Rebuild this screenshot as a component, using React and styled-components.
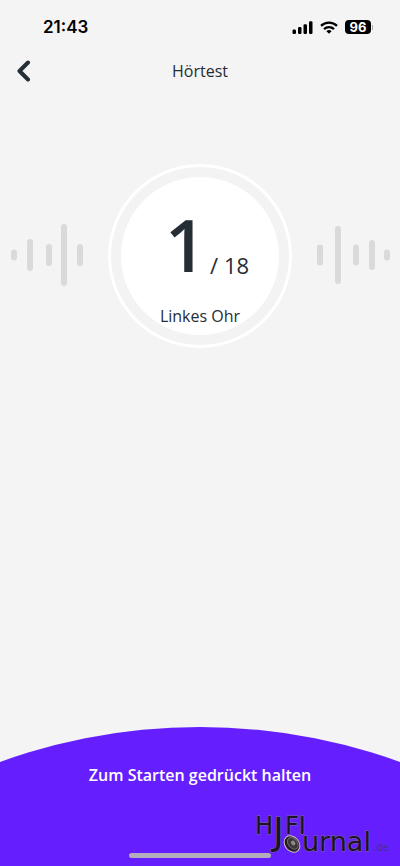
import React from 'react'
import styled, { createGlobalStyle } from 'styled-components'

const GlobalStyle = createGlobalStyle`
  * {
    box-sizing: border-box;
  }

  body {
    margin: 0;
    background: #f4f4f4;
    color: #252d35;
    font-family: "Open Sans", sans-serif;
  }
`

// **** Styled Components : Start
const Screen = styled.div`
  position: relative;
  display: flex;
  flex-direction: column;
  min-height: 100vh;
  overflow: hidden;
`

const StatusBar = styled.div`
  display: flex;
  align-items: center;
  justify-content: space-between;
  height: 54px;
  padding: 0 27px 0 43px;
  color: #000;
  font-family: Inter, sans-serif;
`

const Time = styled.span`
  font-size: 17px;
  font-weight: 600;
`

const StatusIcons = styled.div`
  display: flex;
  align-items: center;
  gap: 7px;
`

const Battery = styled.span`
  display: flex;
  align-items: center;
  gap: 1px;

  &::after {
    content: "";
    width: 1px;
    height: 5px;
    background: #aaa;
  }
`

const BatteryLevel = styled.span`
  width: 26px;
  border-radius: 4px;
  background: #000;
  color: #fff;
  font-size: 13px;
  font-weight: 700;
  line-height: 14px;
  text-align: center;
`

const Header = styled.header`
  display: grid;
  grid-template-columns: 48px 1fr 48px;
  align-items: center;
  height: 34px;
`

const BackButton = styled.button`
  display: flex;
  padding: 0 0 0 16px;
  border: 0;
  background: none;
  color: inherit;
  cursor: pointer;
`

const Title = styled.h1`
  margin: 0;
  font-size: 16px;
  font-weight: 400;
  line-height: 24px;
  text-align: center;
`

const Main = styled.main`
  display: flex;
  flex: 1;
  align-items: flex-start;
  justify-content: space-between;
  padding: 76px 10px 40px;
`

const Wave = styled.svg`
  flex: none;
  margin-top: 60px;
  fill: #dadada;
`

const Ring = styled.div`
  flex: none;
  padding: 10px;
  border: 3px solid #fff;
  border-radius: 50%;
  background: #f3f3f3;
`

const Dial = styled.div`
  display: flex;
  flex-direction: column;
  align-items: center;
  width: 158px;
  height: 158px;
  padding-top: 27px;
  border-radius: 50%;
  background: #fff;
`

const Counter = styled.div`
  display: flex;
  align-items: flex-end;
  gap: 4px;
  padding-left: 14px;
`

const Current = styled.span`
  font-size: 72px;
  font-weight: 600;
  line-height: 80px;
`

const Total = styled.span`
  font-size: 22px;
  line-height: 38px;
`

const Ear = styled.div`
  margin-top: 20px;
  font-size: 16px;
  line-height: 24px;
`

const Footer = styled.footer`
  position: relative;
`

const HoldButton = styled.button`
  display: block;
  width: 100%;
  padding: 36px 16px 79px;
  border: 0;
  background: #651fff;
  clip-path: circle(589px at 50% 589px);
  color: #fff;
  font-family: inherit;
  font-size: 16px;
  font-weight: 600;
  line-height: 24px;
  cursor: pointer;
`

const HomeIndicator = styled.div`
  position: absolute;
  bottom: 8px;
  left: 50%;
  width: 142px;
  height: 5px;
  border-radius: 3px;
  background: #b3adbc;
  transform: translateX(-50%);
`

const Watermark = styled.svg`
  position: absolute;
  right: 10px;
  bottom: 6px;
  overflow: visible;
  pointer-events: none;
`

const LogoText = styled.text`
  fill: ${({ $faint }) => ($faint ? '#4a2f86' : '#1b1328')};
  stroke: ${({ $faint }) => ($faint ? 'none' : '#80668c')};
  stroke-width: 1px;
  paint-order: stroke;
  font-family: "DejaVu Sans", sans-serif;
`
// **** Styled Components : End

// [x, height] of every bar
const leftBars = [[1, 11], [17, 32], [36, 22], [51, 62], [67, 22]]
const rightBars = [[0, 21], [18, 58], [36, 21], [52, 30], [67, 11]]

const SoundWave = ({ bars }) => (
  <Wave width="73" height="62" viewBox="0 0 73 62" aria-hidden="true">
    {bars.map(([x, height]) => (
      <rect key={x} x={x} y={(62 - height) / 2} width="6" height={height} rx="3" />
    ))}
  </Wave>
)

const SignalIcon = () => (
  <svg width="21" height="13" viewBox="0 0 21 13" aria-hidden="true">
    <rect x="0.5" y="8.5" width="3.5" height="4.5" rx="1.2" />
    <rect x="6" y="6" width="3.5" height="7" rx="1.2" />
    <rect x="11.5" y="3.2" width="3.5" height="9.8" rx="1.2" />
    <rect x="17" y="0.2" width="3.5" height="12.8" rx="1.2" />
  </svg>
)

const WifiIcon = () => (
  <svg width="18" height="13" viewBox="0 0 18 13" fill="none" stroke="#000" strokeWidth="2.3" aria-hidden="true">
    <path d="M1 4.9a11.4 11.4 0 0 1 16 0" />
    <path d="M4 8.1a7.2 7.2 0 0 1 10 0" />
    <path d="M6.4 10.2a3.8 3.8 0 0 1 5.2 0L9 12.8z" fill="#000" stroke="none" />
  </svg>
)

const ChevronIcon = () => (
  <svg width="15" height="22" viewBox="0 0 15 22" fill="none" stroke="currentColor" strokeWidth="4" strokeLinecap="round" strokeLinejoin="round" aria-hidden="true">
    <path d="M12 2.5L3.5 11l8.5 8.5" />
  </svg>
)

const HifiLogo = () => (
  <Watermark width="136" height="46" viewBox="0 0 136 46" role="img" aria-label="HIFI Journal.de">
    <LogoText x="1" y="20" fontSize="24">H</LogoText>
    <LogoText x="19" y="30" fontSize="37">J</LogoText>
    <LogoText x="31" y="20" fontSize="24">FI</LogoText>
    <LogoText x="48" y="37" fontSize="27">urnal</LogoText>
    <LogoText x="119" y="37" fontSize="10" $faint>.de</LogoText>
    <g transform="rotate(50 38 30)">
      <ellipse cx="38" cy="30" rx="9" ry="7" fill="#201b24" stroke="#d4c7b2" strokeWidth="1" />
      <ellipse cx="38" cy="29" rx="6.5" ry="4.5" fill="#3b363b" stroke="#6f696b" strokeWidth="1" />
      <ellipse cx="38" cy="28.5" rx="2.5" ry="2" fill="#8f8986" />
    </g>
  </Watermark>
)

const App = () => {
  return (
    <>
      <GlobalStyle />
      <Screen>
        <StatusBar>
          <Time>21:43</Time>
          <StatusIcons>
            <SignalIcon />
            <WifiIcon />
            <Battery>
              <BatteryLevel>96</BatteryLevel>
            </Battery>
          </StatusIcons>
        </StatusBar>
        <Header>
          <BackButton type="button" aria-label="Zurück">
            <ChevronIcon />
          </BackButton>
          <Title>Hörtest</Title>
        </Header>
        <Main>
          <SoundWave bars={leftBars} />
          <Ring>
            <Dial>
              <Counter>
                <Current>1</Current>
                <Total>/ 18</Total>
              </Counter>
              <Ear>Linkes Ohr</Ear>
            </Dial>
          </Ring>
          <SoundWave bars={rightBars} />
        </Main>
        <Footer>
          <HoldButton type="button">Zum Starten gedrückt halten</HoldButton>
          <HomeIndicator />
          <HifiLogo />
        </Footer>
      </Screen>
    </>
  )
}

export default App
